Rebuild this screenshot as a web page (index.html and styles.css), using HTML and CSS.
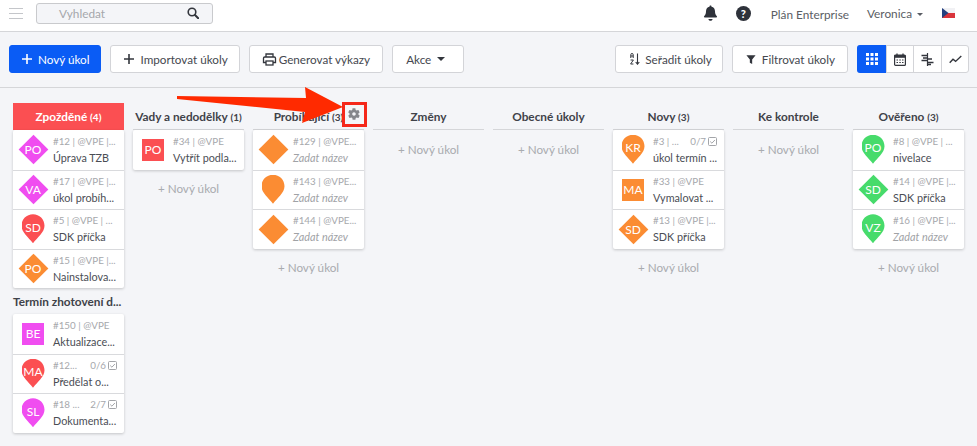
FILE: index.html

```html
<!DOCTYPE html>
<html lang="cs">
<head>
  <meta charset="UTF-8">
  <title>Plán úkolů</title>
  <link rel="stylesheet" href="styles.css">
</head>
<body>
  <div class="topbar">
    <div class="burger"><span></span><span></span><span></span></div>
    <div class="search">
      <span class="search-text">Vyhledat</span>
      <svg width="12" height="12" viewBox="0 0 12 12"><circle cx="5" cy="5" r="3.8" fill="none" stroke="#33363d" stroke-width="1.6"/><path d="M8 8l3.200 3.200" stroke="#33363d" stroke-width="2" stroke-linecap="round"/></svg>
    </div>
    <div class="top-right">
      <svg class="bell" width="15" height="16" viewBox="0 0 16 17"><path d="M8 .5c.7 0 1.100.5 1.100 1.200 2.400.5 3.700 2.400 3.700 5 0 3 .8 4.100 2 5.300.4.500.1 1.200-.6 1.200H1.800c-.7 0-1-.7-.6-1.200 1.200-1.200 2-2.300 2-5.300 0-2.600 1.300-4.500 3.700-5C6.900 1 7.300.5 8 .5z" fill="#2e323a"/><path d="M5.800 14.800h4.400C10.200 16 9.200 16.800 8 16.800s-2.200-.8-2.200-2z" fill="#2e323a"/></svg>
      <span class="help">?</span>
      <span class="plan">Plán Enterprise</span>
      <span class="user">Veronica<i class="caret small"></i></span>
      <svg class="flag" width="13" height="10" viewBox="0 0 13 10"><rect width="13" height="5" fill="#f1f1f4"/><rect y="5" width="13" height="5" fill="#d9343b"/><path d="M0 0l6.500 5L0 10z" fill="#24407f"/></svg>
    </div>
  </div>

  <div class="toolbar">
    <button class="btn primary"><svg width="12" height="12" viewBox="0 0 12 12"><path d="M6 1v10M1 6h10" stroke="#fff" stroke-width="1.600"/></svg>Nový úkol</button>
    <button class="btn"><svg width="12" height="12" viewBox="0 0 12 12"><path d="M6 1v10M1 6h10" stroke="#33363d" stroke-width="1.600"/></svg>Importovat úkoly</button>
    <button class="btn print"><svg width="15" height="13" viewBox="0 0 14 13"><path d="M3.500 4V1h7v3M3.500 9.500H1V5.200C1 4.500 1.500 4 2.200 4h9.600c.7 0 1.200.5 1.200 1.200v4.300h-2.500" fill="none" stroke="#33363d" stroke-width="1.300"/><rect x="3.500" y="8" width="7" height="4" fill="none" stroke="#33363d" stroke-width="1.300"/></svg>Generovat výkazy</button>
    <button class="btn akce">Akce<i class="caret"></i></button>
    <div class="toolbar-right">
      <button class="btn sort"><svg width="10" height="12" viewBox="0 0 10 12"><path d="M7.500 .5v10.500M5.700 9l1.800 2.200L9.300 9" fill="none" stroke="#33363d" stroke-width="1.100"/><path d="M.8 5V1.600C.8.800 1.300.5 2 .5s1.200.3 1.200 1.100V5M.8 3h2.400M.6 7h2.800L.6 11h2.800" fill="none" stroke="#33363d" stroke-width="1"/></svg>Seřadit úkoly</button>
      <button class="btn filter"><svg width="10" height="11" viewBox="0 0 12 12"><path d="M.5.800h11L7.400 6v5.400L4.600 9.800V6z" fill="#33363d"/></svg>Filtrovat úkoly</button>
      <div class="views">
        <span class="view active"><svg width="12" height="12" viewBox="0 0 12 12" fill="#fff"><rect width="3" height="3"/><rect x="4.500" width="3" height="3"/><rect x="9" width="3" height="3"/><rect y="4.500" width="3" height="3"/><rect x="4.500" y="4.500" width="3" height="3"/><rect x="9" y="4.500" width="3" height="3"/><rect y="9" width="3" height="3"/><rect x="4.500" y="9" width="3" height="3"/><rect x="9" y="9" width="3" height="3"/></svg></span>
        <span class="view"><svg width="12" height="13" viewBox="0 0 12 13"><rect x=".6" y="2" width="10.800" height="10.400" rx="1" fill="none" stroke="#33363d" stroke-width="1.200"/><rect x=".6" y="2" width="10.800" height="2.800" fill="#33363d"/><path d="M3 .5v2M9 .5v2" stroke="#33363d" stroke-width="1.300"/><path d="M2.500 7h1.500M5.300 7h1.500M8 7h1.500M2.500 9.500h1.500M5.300 9.500h1.500M8 9.500h1.500" stroke="#33363d" stroke-width="1"/></svg></span>
        <span class="view"><svg width="13" height="13" viewBox="0 0 13 13"><path d="M6.500 0v13" stroke="#33363d" stroke-width="1.200"/><path d="M.5 2.500h6M2 5h4.500M.5 7.500h6M7 6h4M7 9.500h5.500M7 11.500h3" stroke="#33363d" stroke-width="1.300"/></svg></span>
        <span class="view"><svg width="13" height="9" viewBox="0 0 13 9"><path d="M.7 7.800l3.300-3.600 2.600 2.200L12.300 1" fill="none" stroke="#33363d" stroke-width="1.400"/></svg></span>
      </div>
    </div>
  </div>

  <div class="board">
    <div class="col">
      <div class="col-head late">Zpožděné <small>(4)</small></div>
      <div class="cards">
        <div class="card"><div class="mark diamond pink">PO</div><div class="info"><div class="meta">#12 | @VPE |...</div><div class="name">Úprava TZB</div></div></div>
        <div class="card"><div class="mark diamond pink">VA</div><div class="info"><div class="meta">#17 | @VPE |...</div><div class="name">úkol probíh...</div></div></div>
        <div class="card"><div class="mark drop red">SD</div><div class="info"><div class="meta">#5 | @VPE | ...</div><div class="name">SDK příčka</div></div></div>
        <div class="card"><div class="mark diamond orange">PO</div><div class="info"><div class="meta">#15 | @VPE |...</div><div class="name">Nainstalova...</div></div></div>
      </div>
      <div class="group-title">Termín zhotovení d...</div>
      <div class="cards">
        <div class="card"><div class="mark square pink">BE</div><div class="info"><div class="meta">#150 | @VPE</div><div class="name">Aktualizace...</div></div></div>
        <div class="card"><div class="mark drop red">MA</div><div class="info"><div class="meta split">#12...<span class="todo">0/6<svg class="check" width="9" height="9" viewBox="0 0 9 9"><rect x=".5" y=".5" width="8" height="8" rx="1" fill="none" stroke="#a3a5a9"/><path d="M2.200 4.500l1.700 1.700 3-3.200" fill="none" stroke="#a3a5a9"/></svg></span></div><div class="name">Předělat o...</div></div></div>
        <div class="card"><div class="mark drop pink">SL</div><div class="info"><div class="meta split">#18 ...<span class="todo">2/7<svg class="check" width="9" height="9" viewBox="0 0 9 9"><rect x=".5" y=".5" width="8" height="8" rx="1" fill="none" stroke="#a3a5a9"/><path d="M2.200 4.500l1.700 1.700 3-3.200" fill="none" stroke="#a3a5a9"/></svg></span></div><div class="name">Dokumenta...</div></div></div>
      </div>
    </div>

    <div class="col">
      <div class="col-head">Vady a nedodělky <small>(1)</small></div>
      <div class="cards">
        <div class="card"><div class="mark square red">PO</div><div class="info"><div class="meta">#34 | @VPE</div><div class="name">Vytřít podla...</div></div></div>
      </div>
      <div class="add">+ Nový úkol</div>
    </div>

    <div class="col">
      <div class="col-head">Probíhající <small>(3)</small></div>
      <div class="cards">
        <div class="card"><div class="mark diamond orange"></div><div class="info"><div class="meta">#129 | @VPE...</div><div class="name empty">Zadat název</div></div></div>
        <div class="card"><div class="mark drop orange"></div><div class="info"><div class="meta">#143 | @VPE...</div><div class="name empty">Zadat název</div></div></div>
        <div class="card"><div class="mark diamond orange"></div><div class="info"><div class="meta">#144 | @VPE...</div><div class="name empty">Zadat název</div></div></div>
      </div>
      <div class="add">+ Nový úkol</div>
      <div class="gear-box"><svg width="14" height="14" viewBox="0 0 24 24"><path fill="#85878c" d="M19.400 13c.1-.3.1-.7.1-1s0-.7-.1-1l2.100-1.600c.2-.2.2-.4.100-.6l-2-3.500c-.1-.2-.4-.3-.6-.2l-2.500 1c-.5-.4-1.100-.7-1.700-1l-.4-2.600c0-.2-.2-.4-.5-.4h-4c-.2 0-.4.2-.5.4l-.4 2.600c-.6.300-1.200.6-1.700 1l-2.500-1c-.2-.1-.5 0-.6.200l-2 3.500c-.1.200-.1.500.1.600L4.500 11c0 .3-.1.700-.1 1s0 .7.1 1l-2.100 1.600c-.2.200-.2.400-.1.600l2 3.500c.1.200.4.300.6.200l2.500-1c.5.400 1.100.7 1.700 1l.4 2.600c0 .2.200.4.500.4h4c.2 0 .4-.2.500-.4l.4-2.600c.6-.3 1.200-.6 1.700-1l2.500 1c.2.100.5 0 .6-.2l2-3.500c.1-.2.100-.5-.1-.6L19.400 13zM12 15c-1.700 0-3-1.300-3-3s1.300-3 3-3 3 1.300 3 3-1.300 3-3 3z"/></svg></div>
    </div>

    <div class="col">
      <div class="col-head">Změny</div>
      <div class="add first">+ Nový úkol</div>
    </div>

    <div class="col">
      <div class="col-head">Obecné úkoly</div>
      <div class="add first">+ Nový úkol</div>
    </div>

    <div class="col">
      <div class="col-head">Novy <small>(3)</small></div>
      <div class="cards">
        <div class="card"><div class="mark drop orange">KR</div><div class="info"><div class="meta split">#3 | ...<span class="todo">0/7<svg class="check" width="9" height="9" viewBox="0 0 9 9"><rect x=".5" y=".5" width="8" height="8" rx="1" fill="none" stroke="#a3a5a9"/><path d="M2.200 4.500l1.700 1.700 3-3.200" fill="none" stroke="#a3a5a9"/></svg></span></div><div class="name">úkol termín ...</div></div></div>
        <div class="card"><div class="mark square orange">MA</div><div class="info"><div class="meta">#33 | @VPE</div><div class="name">Vymalovat ...</div></div></div>
        <div class="card"><div class="mark diamond orange">SD</div><div class="info"><div class="meta">#13 | @VPE |...</div><div class="name">SDK příčka</div></div></div>
      </div>
      <div class="add">+ Nový úkol</div>
    </div>

    <div class="col">
      <div class="col-head">Ke kontrole</div>
      <div class="add first">+ Nový úkol</div>
    </div>

    <div class="col">
      <div class="col-head">Ověřeno <small>(3)</small></div>
      <div class="cards">
        <div class="card"><div class="mark drop green">PO</div><div class="info"><div class="meta">#8 | @VPE | ...</div><div class="name">nivelace</div></div></div>
        <div class="card"><div class="mark diamond green">SD</div><div class="info"><div class="meta">#14 | @VPE |...</div><div class="name">SDK příčka</div></div></div>
        <div class="card"><div class="mark drop green">VZ</div><div class="info"><div class="meta">#16 | @VPE |...</div><div class="name empty">Zadat název</div></div></div>
      </div>
      <div class="add">+ Nový úkol</div>
    </div>
  </div>

  <svg class="arrow" width="170" height="40" viewBox="0 0 170 40"><path d="M0 11L129 13 128 2 166 22 125 38 128 27 0 14z" fill="#ff2a00"/></svg>
</body>
</html>
```

FILE: styles.css

```css
* {
  box-sizing: border-box;
}

body {
  margin: 0;
  height: 446px;
  overflow: hidden;
  position: relative;
  font-family: Lato, sans-serif;
  background: #f4f5f8;
  color: #3c3f46;
}

.topbar {
  height: 32px;
  background: #fff;
  border-bottom: 1px solid #d5d6d9;
  display: flex;
  align-items: center;
  padding: 0 0 5px 9px;
}

.burger {
  width: 14px;
  display: flex;
  flex-direction: column;
  gap: 4px;
}

.burger span {
  height: 1px;
  background: #c4c6ca;
}

.search {
  width: 177px;
  height: 21px;
  margin-left: 13px;
  padding: 0 13px 0 22px;
  display: flex;
  align-items: center;
  justify-content: space-between;
  background: #f4f5f8;
  border: 1px solid #c9cacd;
  border-radius: 3px;
}

.search-text {
  font-size: 11.8px;
  color: #a5a7ab;
}

.top-right {
  margin-left: auto;
  display: flex;
  align-items: center;
  font-size: 11.8px;
  color: #5a5d64;
  padding-right: 22px;
}

.help {
  width: 15px;
  height: 15px;
  margin-left: 18px;
  border-radius: 50%;
  background: #2e323a;
  color: #fff;
  font-size: 11px;
  font-weight: 900;
  line-height: 15px;
  text-align: center;
}

.plan {
  margin-left: 20px;
  padding-top: 2px;
}

.user {
  margin-left: 18px;
}

.flag {
  margin-left: 19px;
}

.toolbar {
  height: 56px;
  border-bottom: 1px solid #d5d6d9;
  display: flex;
  align-items: flex-start;
  padding: 13px 8px 0 9px;
  gap: 9px;
}

.toolbar-right {
  margin-left: auto;
  display: flex;
  gap: 9px;
}

.btn {
  height: 28px;
  padding: 0 11px 0 12px;
  display: flex;
  align-items: center;
  gap: 5px;
  background: #fff;
  border: 1px solid #d3d4d8;
  border-radius: 3px;
  font-family: Lato, sans-serif;
  font-size: 11.7px;
  color: #45484f;
}

.btn.primary {
  background: #0a5cf5;
  border-color: #0a5cf5;
  color: #fff;
  padding-left: 11px;
}

.btn.print {
  padding-right: 12px;
}

.btn.print svg {
  margin-right: -3px;
}

.btn.akce {
  padding: 0 18px 0 13px;
  gap: 0;
}

.btn.sort {
  padding: 0 10px 0 14px;
}

.btn.filter {
  padding: 0 12px 0 13px;
  gap: 6px;
}

.caret {
  display: inline-block;
  margin-left: 6px;
  border-top: 4px solid #33363d;
  border-left: 4.5px solid transparent;
  border-right: 4.5px solid transparent;
}

.caret.small {
  margin-left: 5px;
  vertical-align: 2px;
  border-top-width: 3px;
  border-left-width: 3px;
  border-right-width: 3px;
  border-top-color: #5a5d64;
}

.views {
  display: flex;
  height: 28px;
  background: #fff;
  border: 1px solid #d3d4d8;
  border-radius: 3px;
}

.view {
  width: 28px;
  display: flex;
  align-items: center;
  justify-content: center;
  border-left: 1px solid #d3d4d8;
}

.view:nth-child(2),
.view:last-child {
  width: 27px;
}

.view:first-child {
  border-left: 0;
}

.view.active {
  background: #0a5cf5;
  margin: -1px 0 -1px -1px;
  border-radius: 3px 0 0 3px;
  width: 29px;
}

.board {
  display: flex;
  gap: 9px;
  padding: 15px 0 0 13px;
}

.col {
  width: 111px;
  position: relative;
}

.col-head {
  height: 27px;
  border-bottom: 1px solid #d5d6d9;
  font-size: 11.8px;
  font-weight: 700;
  color: #3f4249;
  text-align: center;
  line-height: 27px;
  white-space: nowrap;
}

.col-head small {
  font-size: 10px;
}

.col-head.late {
  background: #fb4f52;
  border-bottom: 0;
  color: #fff;
}

.cards {
  background: #fff;
  box-shadow: 0 1px 3px rgba(0, 0, 0, 0.2);
  border-radius: 2px;
}

.card {
  height: 39.5px;
  display: flex;
  align-items: center;
  border-top: 1px solid #d9dadd;
}

.card:first-child {
  border-top: 0;
}

.mark {
  width: 40px;
  flex: none;
  height: 30px;
  position: relative;
  isolation: isolate;
  display: flex;
  align-items: center;
  justify-content: center;
  font-size: 12px;
  color: #fff;
}

.mark::before {
  content: "";
  position: absolute;
  z-index: -1;
  background: var(--shade);
}

.pink { --shade: #f04df0; }
.red { --shade: #fb4f52; }
.orange { --shade: #fb8c33; }
.green { --shade: #47db6b; }

.diamond::before {
  width: 21px;
  height: 21px;
  left: 9.5px;
  top: 4.5px;
  transform: rotate(45deg);
}

.square::before {
  width: 22px;
  height: 22px;
  left: 9px;
  top: 4px;
}

.drop {
  padding-bottom: 4px;
}

.drop::before {
  width: 23px;
  height: 29px;
  left: 8.5px;
  top: 0;
  clip-path: path("M11.5 0C18 0 23 5 23 11.5 23 18 16 23 11.5 29 7 23 0 18 0 11.500 0 5 5 0 11.500 0z");
}

.info {
  flex: 1;
  min-width: 0;
  padding-right: 7px;
}

.meta {
  font-size: 9.8px;
  color: #a6a8ac;
  line-height: 13px;
  white-space: nowrap;
  margin-bottom: 3px;
}

.meta.split {
  display: flex;
  justify-content: space-between;
}

.todo {
  display: flex;
  align-items: center;
  gap: 2px;
}

.name {
  font-size: 10.8px;
  line-height: 14px;
  color: #4a4d54;
  white-space: nowrap;
}

.name.empty {
  font-style: italic;
  color: #a0a2a6;
}

.group-title {
  margin: 7px 0 5px;
  font-size: 11.8px;
  line-height: 14px;
  font-weight: 700;
  color: #3f4249;
  white-space: nowrap;
}

.add {
  margin-top: 11px;
  font-size: 11.7px;
  line-height: 14px;
  color: #a9abaf;
  text-align: center;
}

.add.first {
  margin-top: 12px;
}

.gear-box {
  position: absolute;
  left: 89px;
  top: -1px;
  width: 25px;
  height: 25px;
  padding: 0 1px 1px 0;
  border: 3px solid #f5281a;
  display: flex;
  align-items: center;
  justify-content: center;
}

.arrow {
  position: absolute;
  left: 177px;
  top: 85px;
}
```
